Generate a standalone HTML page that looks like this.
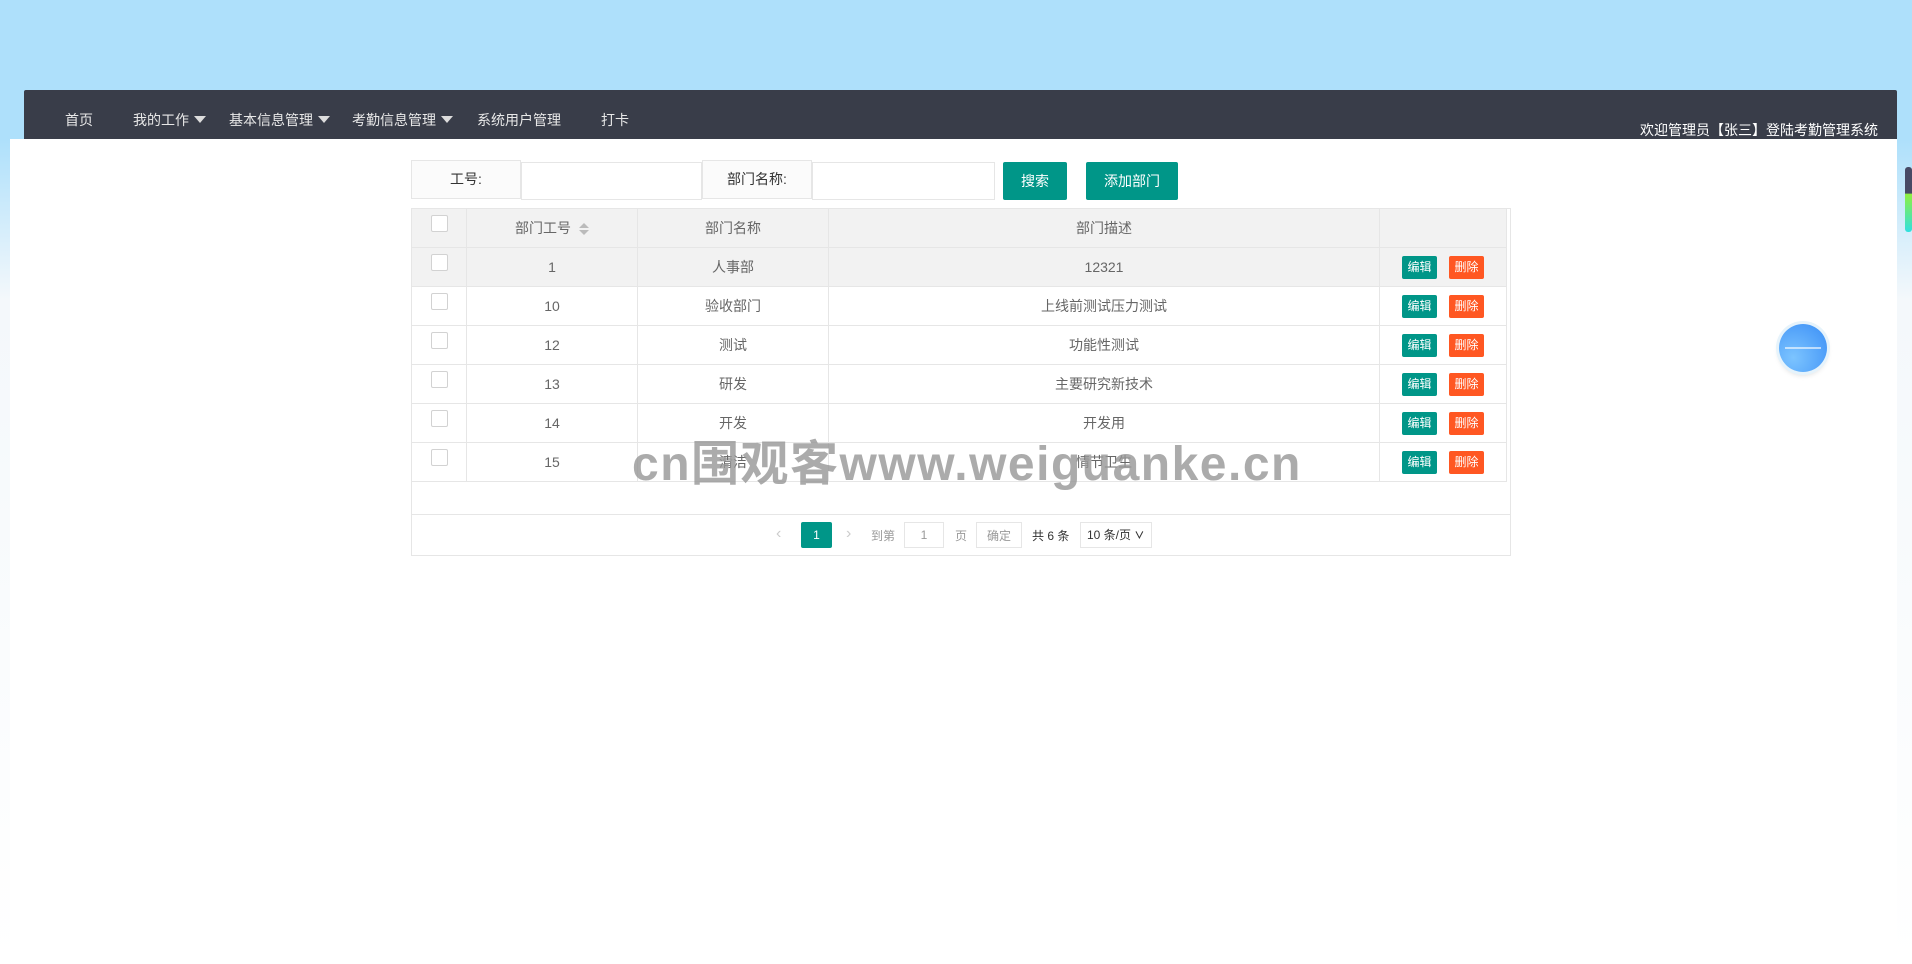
<!DOCTYPE html>
<html><head><meta charset="utf-8"><style>
*{margin:0;padding:0;box-sizing:border-box}
body{width:1912px;height:964px;overflow:hidden;position:relative;font-family:"Liberation Sans","Noto Sans CJK SC",sans-serif;font-size:14px;color:#666;background:linear-gradient(#aee0fb 0,#aee0fb 140px,#f4f8fb 300px,#fff 964px)}
.a{position:absolute}
#nav{left:24px;top:90px;width:1873px;height:49px;background:#393d49;border-radius:2px 2px 0 0}
.ni{position:absolute;top:110px;color:#e8e8e8;font-size:14px;white-space:nowrap}
.tri{display:inline-block;width:0;height:0;border-left:6px solid transparent;border-right:6px solid transparent;border-top:7px solid #ddd;margin-left:5px;vertical-align:2px}
#main{left:10px;top:139px;width:1887px;height:812px;background:#fff}
.lbl{background:#fbfbfb;border:1px solid #e6e6e6;text-align:center;line-height:37px;color:#333;height:39px}
.inp{background:#fff;border:1px solid #e6e6e6;height:39px}
.btn{background:#009688;color:#fff;text-align:center;line-height:38px;border-radius:2px;height:38px}
table{border-collapse:collapse;position:absolute;left:411px;top:208px;table-layout:fixed}
td,th{border:1px solid #e6e6e6;height:39px;text-align:center;font-weight:normal;color:#666;font-size:14px}
th{background:#f2f2f2}
.cb{display:inline-block;width:17px;height:17px;border:1px solid #d2d2d2;border-radius:2px;background:#fff;margin-top:-12px;vertical-align:middle}
.e,.d{display:inline-block;width:35px;height:23px;line-height:23px;color:#fff;font-size:12px;border-radius:2px}
.e{background:#009688;margin-right:12px}.d{background:#ff5722}
.sort{display:inline-block;vertical-align:middle;margin-left:8px}
.sort i{display:block;width:0;height:0;border-left:5px solid transparent;border-right:5px solid transparent}
</style></head><body>
<div class="a" id="nav"></div>
<div class="ni" style="left:65px">首页</div>
<div class="ni" style="left:133px">我的工作<span class="tri"></span></div>
<div class="ni" style="left:229px">基本信息管理<span class="tri"></span></div>
<div class="ni" style="left:352px">考勤信息管理<span class="tri"></span></div>
<div class="ni" style="left:477px">系统用户管理</div>
<div class="ni" style="left:601px">打卡</div>
<div class="a" style="right:34px;top:120px;color:#fff;font-size:14px">欢迎管理员【张三】登陆考勤管理系统</div>
<div class="a" id="main"></div>
<div class="a lbl" style="left:411px;top:160px;width:110px">工号:</div>
<div class="a inp" style="left:521px;top:162px;width:181px;height:38px"></div>
<div class="a lbl" style="left:702px;top:160px;width:110px">部门名称:</div>
<div class="a inp" style="left:812px;top:162px;width:183px;height:38px"></div>
<div class="a btn" style="left:1003px;top:162px;width:64px">搜索</div>
<div class="a btn" style="left:1086px;top:162px;width:92px">添加部门</div>
<div class="a" style="left:411px;top:208px;width:1100px;height:348px;border:1px solid #e6e6e6"></div>
<table>
<colgroup><col style="width:55px"><col style="width:171px"><col style="width:191px"><col style="width:551px"><col style="width:127px"></colgroup>
<tr><th><span class="cb"></span></th><th>部门工号<span class="sort"><i style="border-bottom:5px solid #bbb;margin-bottom:2px"></i><i style="border-top:5px solid #bbb"></i></span></th><th>部门名称</th><th>部门描述</th><th></th></tr>
<tr style="background:#f2f2f2"><td><span class="cb"></span></td><td>1</td><td>人事部</td><td>12321</td><td><span class="e">编辑</span><span class="d">删除</span></td></tr>
<tr><td><span class="cb"></span></td><td>10</td><td>验收部门</td><td>上线前测试压力测试</td><td><span class="e">编辑</span><span class="d">删除</span></td></tr>
<tr><td><span class="cb"></span></td><td>12</td><td>测试</td><td>功能性测试</td><td><span class="e">编辑</span><span class="d">删除</span></td></tr>
<tr><td><span class="cb"></span></td><td>13</td><td>研发</td><td>主要研究新技术</td><td><span class="e">编辑</span><span class="d">删除</span></td></tr>
<tr><td><span class="cb"></span></td><td>14</td><td>开发</td><td>开发用</td><td><span class="e">编辑</span><span class="d">删除</span></td></tr>
<tr><td><span class="cb"></span></td><td>15</td><td>清洁</td><td>情节卫生</td><td><span class="e">编辑</span><span class="d">删除</span></td></tr>
</table>
<div class="a" style="left:411px;top:514px;width:1100px;height:1px;background:#e6e6e6"></div>
<div class="a" style="left:776px;top:525px;color:#ccc;font-size:16px">&lsaquo;</div>
<div class="a" style="left:801px;top:522px;width:31px;height:26px;background:#009688;color:#fff;text-align:center;line-height:26px;font-size:12px;border-radius:2px">1</div>
<div class="a" style="left:846px;top:525px;color:#ccc;font-size:16px">&rsaquo;</div>
<div class="a" style="left:871px;top:527px;font-size:12px;color:#999">到第</div>
<div class="a" style="left:904px;top:522px;width:40px;height:26px;border:1px solid #e6e6e6;text-align:center;line-height:24px;font-size:12px;color:#999">1</div>
<div class="a" style="left:955px;top:527px;font-size:12px;color:#999">页</div>
<div class="a" style="left:976px;top:522px;width:46px;height:26px;border:1px solid #e6e6e6;text-align:center;line-height:26px;font-size:12px;color:#999">确定</div>
<div class="a" style="left:1032px;top:527px;font-size:12px;color:#333">共 6 条</div>
<div class="a" style="left:1080px;top:522px;width:72px;height:26px;border:1px solid #e6e6e6;line-height:24px;font-size:12px;color:#333;padding-left:6px">10 条/页 <b style="font-size:10px">&#8744;</b></div>
<div class="a" style="left:632px;top:440px;font-size:48px;font-weight:bold;color:rgba(150,150,150,.8);letter-spacing:1.5px;white-space:nowrap;line-height:50px">cn围观客www.weiguanke.cn</div>
<div class="a" style="left:1779px;top:324px;width:48px;height:48px;border-radius:50%;background:radial-gradient(circle at 30% 70%,#7cc4ff,#3a8ef6);box-shadow:0 0 0 3px #e6f3fb,0 3px 6px rgba(0,0,0,.15)"></div>
<div class="a" style="left:1785px;top:347px;width:36px;height:2px;background:rgba(255,255,255,.6)"></div>
<div class="a" style="left:1905px;top:167px;width:7px;height:65px;border-radius:3px;background:linear-gradient(#474a65 0,#474a65 40%,#8ef040 42%,#30e0e0 100%)"></div>
</body></html>
